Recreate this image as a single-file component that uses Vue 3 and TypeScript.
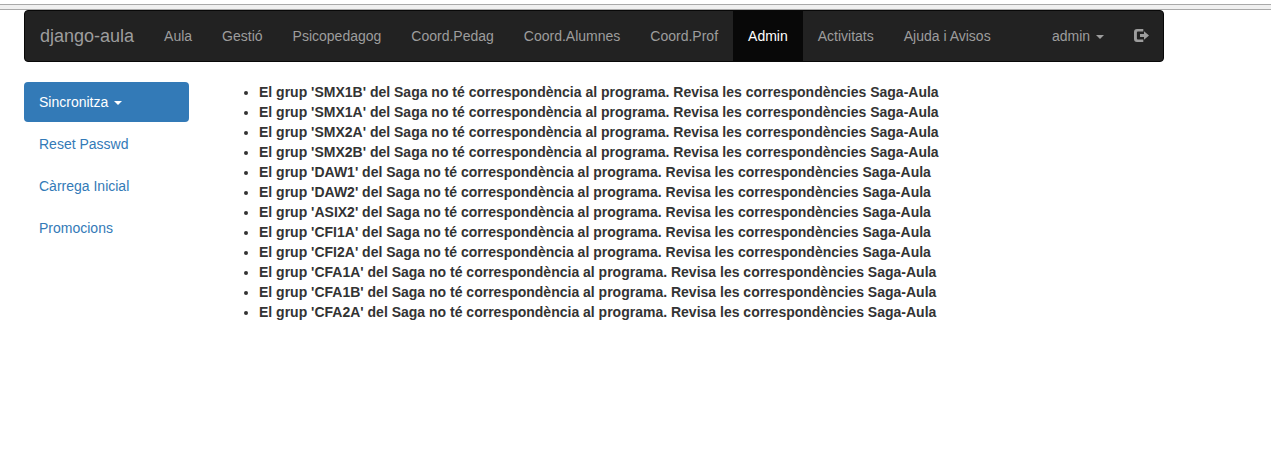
<script setup lang="ts">
interface MenuItem {
  label: string
  active?: boolean
}

const menu: MenuItem[] = [
  { label: 'Aula' },
  { label: 'Gestió' },
  { label: 'Psicopedagog' },
  { label: 'Coord.Pedag' },
  { label: 'Coord.Alumnes' },
  { label: 'Coord.Prof' },
  { label: 'Admin', active: true },
  { label: 'Activitats' },
  { label: 'Ajuda i Avisos' },
]

const sideLinks: string[] = ['Reset Passwd', 'Càrrega Inicial', 'Promocions']

const groups: string[] = [
  'SMX1B', 'SMX1A', 'SMX2A', 'SMX2B', 'DAW1', 'DAW2',
  'ASIX2', 'CFI1A', 'CFI2A', 'CFA1A', 'CFA1B', 'CFA2A',
]
</script>

<template>
  <div class="page">
    <div class="window-edge"></div>
    <div class="container">
      <nav class="navbar">
        <a class="brand">django-aula</a>
        <ul class="nav">
          <li v-for="item in menu" :key="item.label">
            <a class="nav-link" :class="{ active: item.active }">{{ item.label }}</a>
          </li>
        </ul>
        <ul class="nav nav-right">
          <li><a class="nav-link">admin <b class="caret"></b></a></li>
          <li>
            <a class="nav-link logout" aria-label="Surt">
              <svg width="16" height="14" viewBox="0 0 16 14">
                <path
                  d="M10.3 0H4Q1 0 1 3V10Q1 13 4 13H10.3V10.5H4.9Q3.9 10.5 3.9 9.5V3.5Q3.9 2.5 4.9 2.5H10.3Z"
                  fill="currentColor"
                />
                <path d="M7 5H11V2.2L16 6.5L11 10.8V8H7Z" fill="currentColor" />
              </svg>
            </a>
          </li>
        </ul>
      </nav>
      <div class="row">
        <aside class="sidebar">
          <a class="pill active">Sincronitza <b class="caret"></b></a>
          <a v-for="link in sideLinks" :key="link" class="pill">{{ link }}</a>
        </aside>
        <main class="content">
          <ul class="messages">
            <li v-for="group in groups" :key="group">
              El grup '{{ group }}' del Saga no té correspondència al programa. Revisa les correspondències Saga-Aula
            </li>
          </ul>
        </main>
      </div>
    </div>
  </div>
</template>

<style>
html,
body {
  margin: 0;
  background: #fff;
}
</style>

<style scoped>
.page {
  box-sizing: border-box;
  height: 457px;
  padding-top: 4px;
  overflow: hidden;
  background: #fff;
  color: #333;
  font: 14px/20px "Liberation Sans", Arial, sans-serif;
}
.page * {
  box-sizing: border-box;
}
.window-edge {
  height: 6px;
  border-top: 1px solid #a9a9a9;
  border-bottom: 1px solid #a9a9a9;
  background: #f0f0f0;
}
.container {
  width: 1140px;
  margin-left: 24px;
}
.navbar {
  display: flex;
  height: 52px;
  border: 1px solid #080808;
  border-radius: 4px;
  background: #222;
  color: #9d9d9d;
}
.brand {
  padding: 15px;
  font-size: 18px;
  white-space: nowrap;
}
.nav {
  display: flex;
  margin: 0;
  padding: 0;
  list-style: none;
}
.nav-right {
  margin-left: auto;
}
.nav-link {
  display: block;
  height: 50px;
  padding: 15px;
  white-space: nowrap;
}
.nav-link.active {
  background: #080808;
  color: #fff;
}
.logout {
  width: 44px;
  padding: 18px 14px;
}
.logout svg {
  display: block;
}
.caret {
  display: inline-block;
  margin-left: 2px;
  border-top: 4px solid;
  border-right: 4px solid transparent;
  border-left: 4px solid transparent;
  vertical-align: middle;
}
.row {
  display: flex;
  margin-top: 20px;
}
.sidebar {
  display: flex;
  flex-direction: column;
  gap: 2px;
  width: 165px;
}
.pill {
  height: 40px;
  padding: 10px 15px;
  border-radius: 4px;
  color: #337ab7;
}
.pill.active {
  background: #337ab7;
  color: #fff;
}
.content {
  margin-left: 30px;
}
.messages {
  margin: 0;
  padding-left: 40px;
  font-weight: 700;
  white-space: nowrap;
}
</style>
